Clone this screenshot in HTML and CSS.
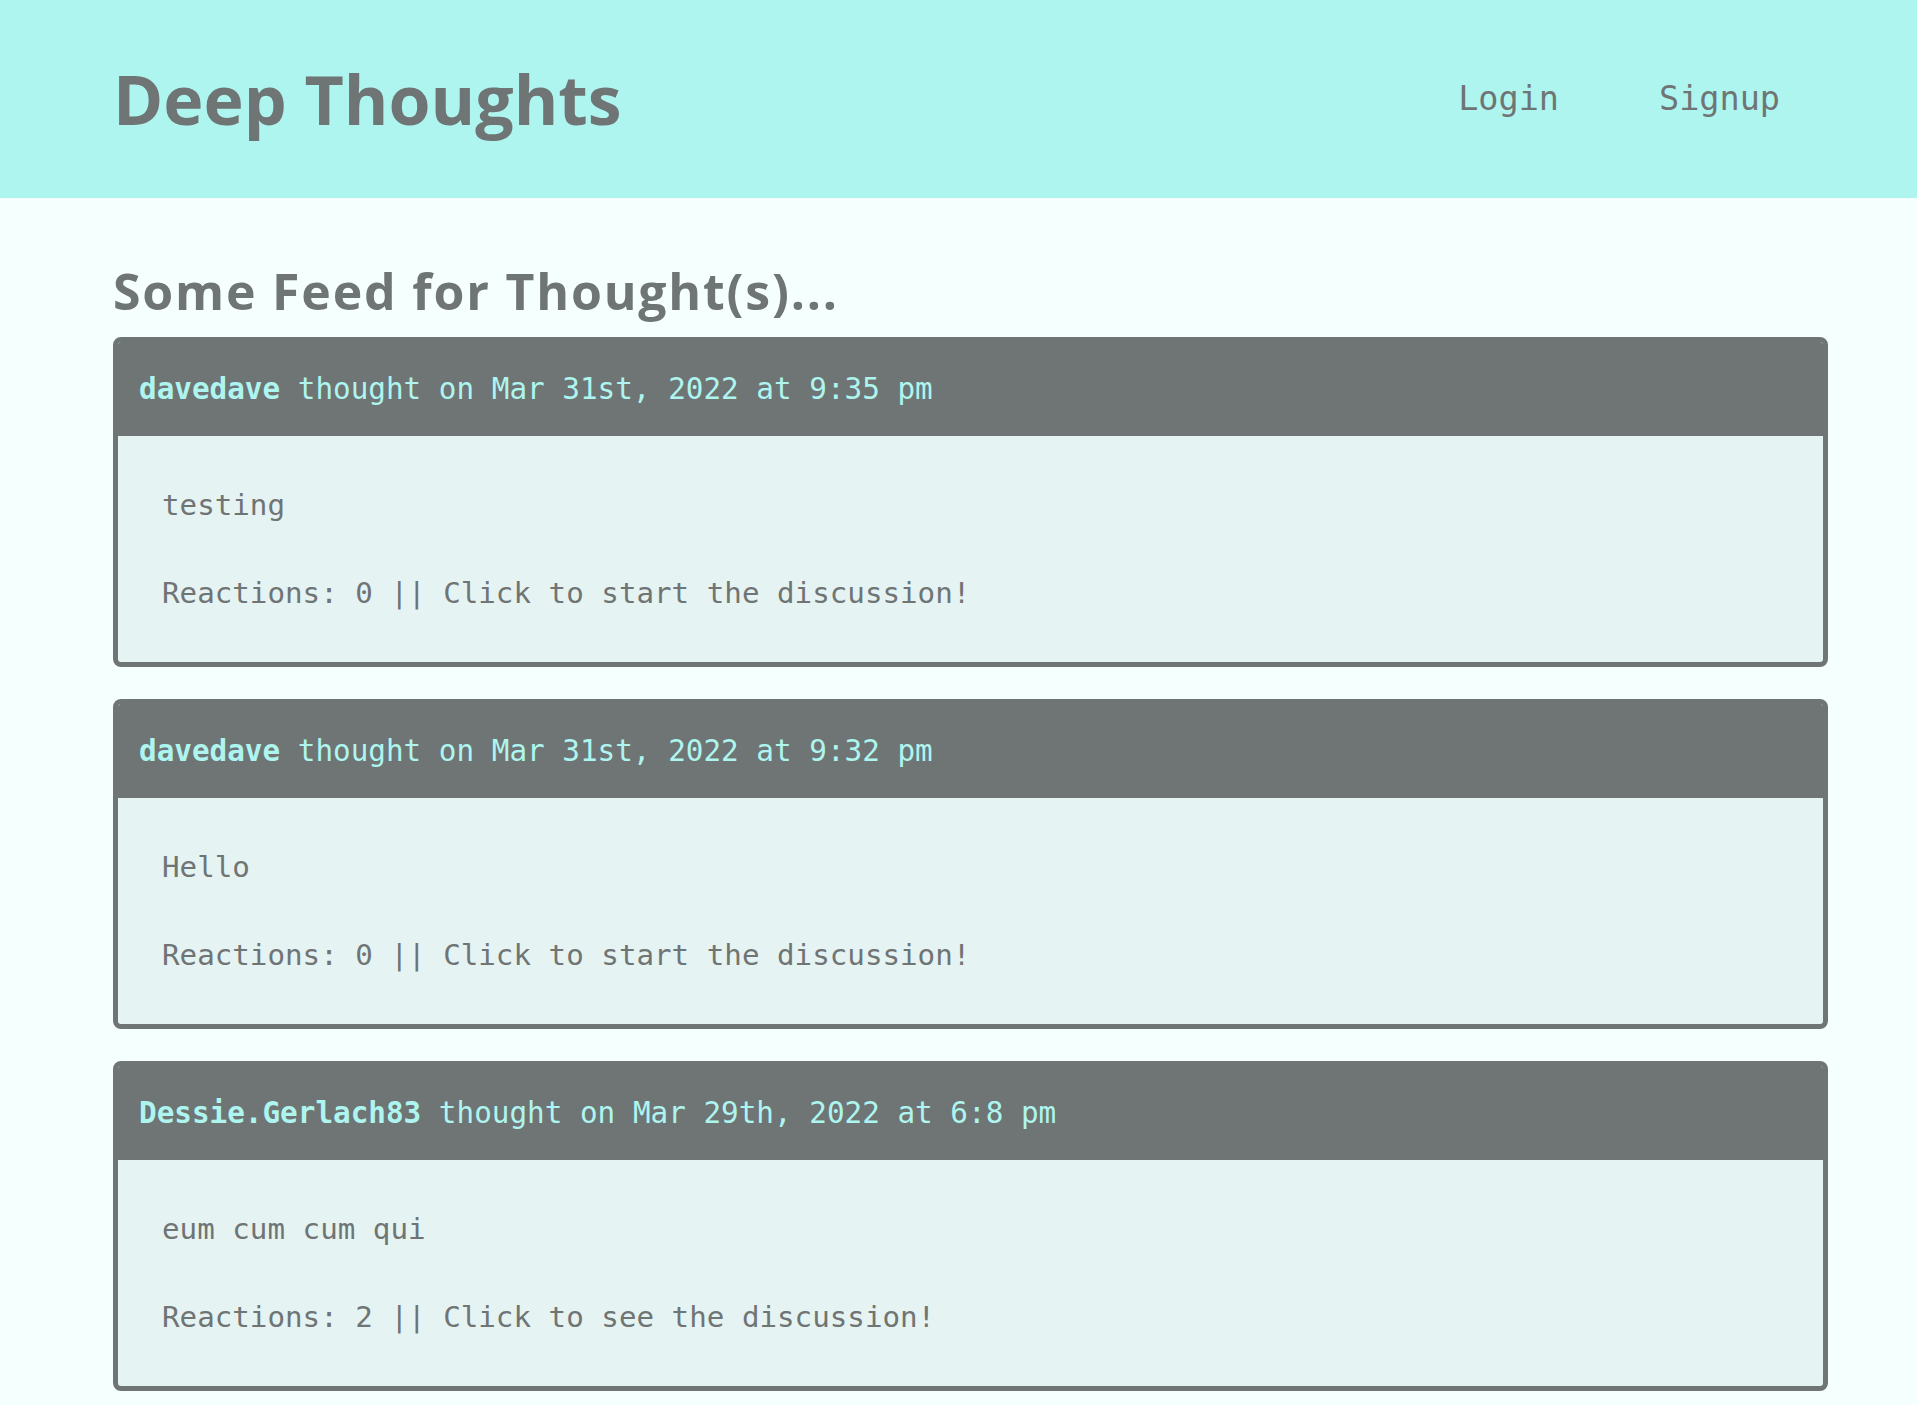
FILE: index.html
```html
<!DOCTYPE html>
<html lang="en">
<head>
<meta charset="utf-8">
<title>Deep Thoughts</title>
<link rel="stylesheet" href="styles.css">
</head>
<body>
<header class="site-header">
  <h1 class="brand">Deep Thoughts</h1>
  <nav class="nav">
    <a class="nav-link" href="#">Login</a>
    <a class="nav-link" href="#">Signup</a>
  </nav>
</header>
<main class="main">
  <h2 class="feed-title">Some Feed for Thought(s)...</h2>
  <div class="feed">
    <article class="card">
      <div class="card-header"><span class="user">davedave</span> thought on Mar 31st, 2022 at 9:35 pm</div>
      <div class="card-body">
        <p>testing</p>
        <p>Reactions: 0 || Click to start the discussion!</p>
      </div>
    </article>
    <article class="card">
      <div class="card-header"><span class="user">davedave</span> thought on Mar 31st, 2022 at 9:32 pm</div>
      <div class="card-body">
        <p>Hello</p>
        <p>Reactions: 0 || Click to start the discussion!</p>
      </div>
    </article>
    <article class="card">
      <div class="card-header"><span class="user">Dessie.Gerlach83</span> thought on Mar 29th, 2022 at 6:8 pm</div>
      <div class="card-body">
        <p>eum cum cum qui</p>
        <p>Reactions: 2 || Click to see the discussion!</p>
      </div>
    </article>
  </div>
</main>
</body>
</html>
```
FILE: styles.css
```css
* { box-sizing: border-box; }
html, body { margin: 0; padding: 0; }
body {
  background: #f5fffe;
  color: #6f7574;
  font-family: "DejaVu Sans Mono", monospace;
}
.site-header {
  background: #aef5f0;
  height: 198px;
  display: flex;
  align-items: center;
  justify-content: space-between;
  padding: 0 137px 0 113px;
}
.brand {
  margin: 0;
  font-family: "Open Sans", Lato, "Liberation Sans", sans-serif;
  font-weight: 700;
  font-size: 68px;
  line-height: 80px;
  color: #6f7574;
}
.nav { display: flex; }
.nav-link {
  font-family: "DejaVu Sans Mono", monospace;
  font-size: 33.5px;
  line-height: 40px;
  color: #6f7574;
  text-decoration: none;
  margin: 0 0 0 100px;
}
.main {
  padding: 63px 89px 40px 113px;
}
.feed-title {
  margin: 0 0 16px 0;
  font-family: "Open Sans", Lato, "Liberation Sans", sans-serif;
  font-weight: 700;
  font-size: 50px;
  letter-spacing: 1.8px;
  line-height: 60px;
  color: #6f7574;
}
.feed {
  display: flex;
  flex-direction: column;
  gap: 32px;
}
.card {
  border: 5px solid #6f7574;
  border-radius: 8px;
  overflow: hidden;
  background: #e6f3f3;
}
.card-header {
  background: #6f7574;
  color: #aef5f0;
  font-size: 29.3px;
  line-height: 94px;
  padding: 0 16px 0 21px;
  white-space: nowrap;
}
.user { font-weight: 700; }
.card-body {
  padding: 51px 44px;
  font-size: 29.2px;
  line-height: 36px;
}
.card-body p { margin: 0; }
.card-body p + p { margin-top: 52px; }
```
